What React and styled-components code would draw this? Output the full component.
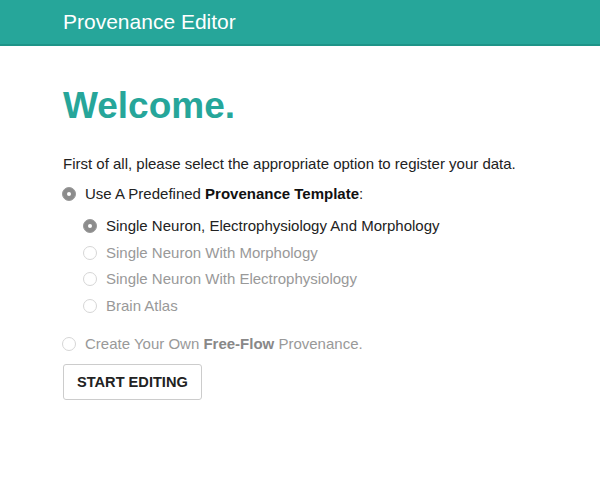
import React, { useState } from 'react'
import styled, { createGlobalStyle } from 'styled-components'

const GlobalStyle = createGlobalStyle`
  body {
    margin: 0;
    background: #fff;
    font-family: "Liberation Sans", Arial, Helvetica, sans-serif;
    color: #222;
  }
`

const Header = styled.header`
  height: 44px;
  background: #26a69a;
  border-bottom: 2px solid #1e9488;
  display: flex;
  align-items: center;
  padding-left: 63px;
  color: #fff;
  font-size: 21px;
  font-weight: 300;
`

const Main = styled.main`
  padding: 37px 62px 0;
`

const Title = styled.h1`
  margin: 0 0 25px 1px;
  color: #26a69a;
  font-size: 37px;
  font-weight: bold;
  line-height: 46px;
`

const Intro = styled.p`
  margin: 0 0 10px 1px;
  font-size: 15px;
  line-height: 20px;
`

const List = styled.div`
  display: flex;
  flex-direction: column;
  gap: ${(p) => p.gap || 0}px;
  padding-left: ${(p) => p.indent || 0}px;
  margin: ${(p) => p.margin || '0'};
`

const Option = styled.label`
  display: flex;
  align-items: center;
  gap: 9px;
  font-size: 15px;
  line-height: 20px;
  color: ${(p) => (p.active ? '#222' : '#999')};
  cursor: pointer;
  b {
    color: ${(p) => (p.active ? '#111' : '#888')};
  }
`

const Dot = styled.span`
  width: 14px;
  height: 14px;
  box-sizing: border-box;
  border-radius: 50%;
  flex: none;
  display: flex;
  align-items: center;
  justify-content: center;
  background: ${(p) => (p.checked ? '#8c8c8c' : '#fff')};
  border: 1px solid ${(p) => (p.checked ? '#9a9a9a' : '#d6d6d6')};
  &::after {
    content: '';
    width: 4px;
    height: 4px;
    border-radius: 50%;
    background: #fff;
    display: ${(p) => (p.checked ? 'block' : 'none')};
  }
`

const Button = styled.button`
  margin: 10px 0 0 1px;
  height: 36px;
  padding: 0 13px;
  background: #fff;
  border: 1px solid #ccc;
  border-radius: 3px;
  font-family: inherit;
  font-size: 14.6px;
  font-weight: bold;
  color: #222;
  cursor: pointer;
`

const templates = [
  'Single Neuron, Electrophysiology And Morphology',
  'Single Neuron With Morphology',
  'Single Neuron With Electrophysiology',
  'Brain Atlas'
]

const App = () => {
  const [template, setTemplate] = useState(0)
  return (
    <>
      <GlobalStyle />
      <Header>Provenance Editor</Header>
      <Main>
        <Title>Welcome.</Title>
        <Intro>First of all, please select the appropriate option to register your data.</Intro>
        <Option active>
          <Dot checked />
          <span>Use A Predefined <b>Provenance Template</b>:</span>
        </Option>
        <List indent={21} gap={6.7} margin="12px 0 18px">
          {templates.map((t, i) => (
            <Option key={t} active={i === template} onClick={() => setTemplate(i)}>
              <Dot checked={i === template} />
              <span>{t}</span>
            </Option>
          ))}
        </List>
        <Option>
          <Dot />
          <span>Create Your Own <b>Free-Flow</b> Provenance.</span>
        </Option>
        <Button>START EDITING</Button>
      </Main>
    </>
  )
}

export default App
